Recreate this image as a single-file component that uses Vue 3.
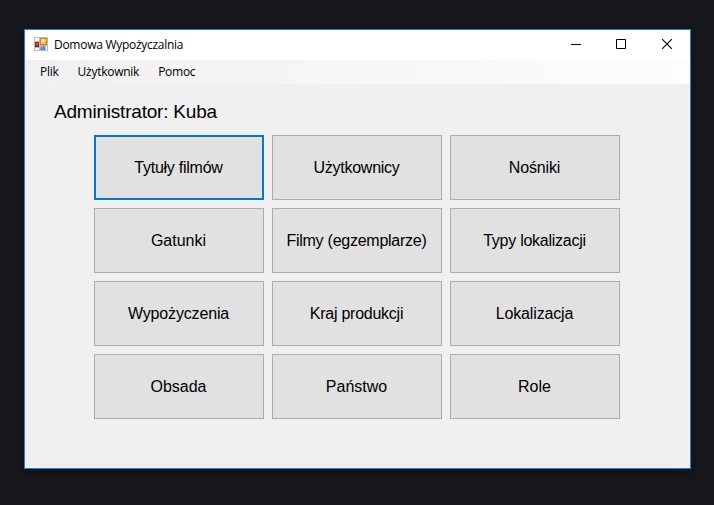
<script setup>
import { ref } from 'vue'

const menu = ['Plik', 'Użytkownik', 'Pomoc']
const tiles = [
  { label: 'Tytuły filmów', fit: 'tight' },
  { label: 'Użytkownicy', fit: 'tight' },
  { label: 'Nośniki', fit: 'snug' },
  { label: 'Gatunki', fit: 'normal' },
  { label: 'Filmy (egzemplarze)', fit: 'tight' },
  { label: 'Typy lokalizacji', fit: 'tight' },
  { label: 'Wypożyczenia', fit: 'snug' },
  { label: 'Kraj produkcji', fit: 'tight' },
  { label: 'Lokalizacja', fit: 'snug' },
  { label: 'Obsada', fit: 'normal' },
  { label: 'Państwo', fit: 'normal' },
  { label: 'Role', fit: 'normal' },
]
const active = ref('Tytuły filmów')
</script>

<template>
  <div class="desktop">
    <div class="window">
      <header class="titlebar">
        <svg class="app-icon" width="14" height="14" viewBox="0 0 14 14" shape-rendering="crispEdges">
          <defs>
            <linearGradient id="gold" x1="0" y1="0" x2="1" y2="1">
              <stop offset="0" stop-color="#ffee9b" /><stop offset="1" stop-color="#eeb31c" />
            </linearGradient>
            <linearGradient id="blue" x1="0" y1="0" x2="1" y2="1">
              <stop offset="0" stop-color="#8fbdf5" /><stop offset="1" stop-color="#3d72d6" />
            </linearGradient>
          </defs>
          <rect width="14" height="14" fill="#b9b9b9" />
          <path d="M1 1h4v3H1zM1 11h4v2H1zM12 9h1v4h-1z" fill="#fff" />
          <rect x="1" y="5" width="4" height="5" fill="#a01c18" />
          <rect x="2" y="6" width="2" height="2" fill="#e0685c" />
          <rect x="6" y="1" width="7" height="7" fill="#c48b14" />
          <rect x="7" y="2" width="5" height="5" fill="url(#gold)" />
          <rect x="6" y="9" width="5" height="4" fill="url(#blue)" />
        </svg>
        <span class="title">Domowa Wypożyczalnia</span>
        <div class="controls">
          <svg width="10" height="10" viewBox="0 0 10 10"><path d="M0 5.5h10" stroke="#000" /></svg>
          <svg width="10" height="10" viewBox="0 0 10 10"><path d="M.5.5h9v9h-9z" fill="none" stroke="#000" /></svg>
          <svg class="close" width="10" height="10" viewBox="0 0 10 10"><path d="M0 0l10 10M10 0L0 10" stroke="#000" stroke-width="1.1" /></svg>
        </div>
      </header>
      <nav class="menubar">
        <span v-for="m in menu" :key="m">{{ m }}</span>
      </nav>
      <main class="content">
        <h1 class="heading">Administrator: Kuba</h1>
        <div class="grid">
          <button
            v-for="t in tiles" :key="t.label" class="tile"
            :class="[t.fit, { active: t.label === active }]" @click="active = t.label"
          >{{ t.label }}</button>
        </div>
      </main>
    </div>
  </div>
</template>

<style>
body { margin: 0; background: #18171d; }
</style>

<style scoped>
.desktop {
  box-sizing: border-box;
  height: 505px;
  padding: 29px 23px 0 24px;
  background: #18171d;
  overflow: hidden;
}
.window {
  box-sizing: border-box;
  height: 440px;
  border: 1px solid #1883d7;
  background: #f0f0f0;
  box-shadow: 0 3px 12px rgba(0, 0, 0, .4);
  color: #000;
}
.titlebar {
  display: flex;
  align-items: center;
  height: 30px;
  padding: 0 18px 0 9px;
  box-sizing: border-box;
  background: #fff;
  font: 12px/30px "Open Sans", "Noto Sans", sans-serif;
}
.title { margin-left: 6px; letter-spacing: -.28px; }
.app-icon { margin-bottom: 2px; }
.controls { display: flex; gap: 35px; margin: 0 0 2px auto; }
.controls svg { display: block; }
.controls .close { margin-left: 1px; }
.menubar {
  display: flex;
  gap: 19px;
  height: 24px;
  padding-left: 15px;
  background: linear-gradient(90deg, #f0f0f0, #fdfdfd);
  font: 12px/24px "Open Sans", "Noto Sans", sans-serif;
  letter-spacing: -.26px;
}
.content { padding: 16px 0 0 29px; }
.heading {
  margin: 0;
  height: 35px;
  font: 400 19px/23px "Liberation Sans", Arial, sans-serif;
  letter-spacing: -.21px;
}
.grid {
  display: grid;
  grid-template-columns: repeat(3, 170px);
  grid-auto-rows: 65px;
  gap: 8px;
  margin-left: 40px;
}
.tile {
  box-sizing: border-box;
  padding: 0 1px 0 0;
  border: 1px solid #adadad;
  background: #e1e1e1;
  color: #000;
  font: 16px/20px "Liberation Sans", Arial, sans-serif;
}
.tile.snug { letter-spacing: -.15px; }
.tile.tight { letter-spacing: -.25px; }
.tile.active { border: 2px solid #0078d7; }
</style>
